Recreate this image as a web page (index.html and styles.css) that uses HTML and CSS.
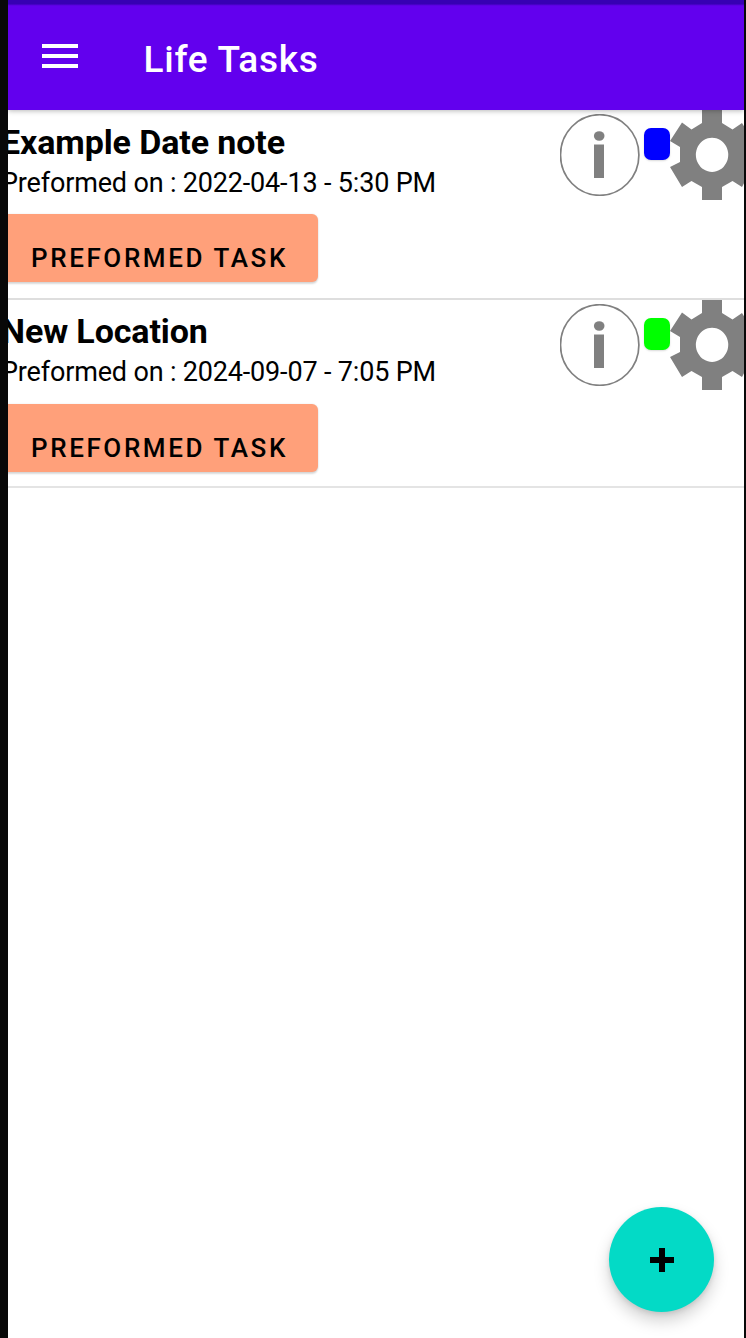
FILE: index.html
```html
<!DOCTYPE html>
<html lang="en">
<head>
<meta charset="utf-8">
<title>Life Tasks</title>
<link rel="stylesheet" href="styles.css">
</head>
<body>
<svg class="defs" aria-hidden="true">
  <symbol id="info" viewBox="0 0 80 82">
    <ellipse cx="39.7" cy="41" rx="39.2" ry="40.3" fill="none" stroke="#808080" stroke-width="1.7"/>
    <ellipse cx="39.2" cy="22" rx="5.3" ry="4.8" fill="#808080"/>
    <path d="M34 30.5h10V64H34z" fill="#808080"/>
  </symbol>
  <symbol id="gear" viewBox="0 0 74 90">
    <path fill="#808080" fill-rule="evenodd" d="M32 0H52V13L62.5 19.5L72 13L83 31L74 37V52L83 57L72 77L62.5 71L52 77V90H32V77L21.5 71L12 77L0 57L10 52V37L0 31L12 12.5L21.5 19.5L32 13ZM42 27.7a16.2 17.1 0 1 0 .1 0Z"/>
  </symbol>
</svg>
<div class="screen">
  <header class="bar">
    <svg class="menu" viewBox="0 0 36 24"><path d="M0 0h36v4H0zM0 10h36v4H0zM0 20h36v4H0z" fill="#fff"/></svg>
    <h1 class="title">Life Tasks</h1>
  </header>
  <main class="list">
    <section class="task">
      <div class="details">
        <h2 class="name">Example Date note</h2>
        <p class="when">Preformed on : 2022-04-13 - 5:30 PM</p>
        <button class="action">PREFORMED TASK</button>
      </div>
      <div class="icons">
        <svg class="info"><use href="#info"/></svg>
        <span class="chip blue"></span>
        <svg class="gear"><use href="#gear"/></svg>
      </div>
    </section>
    <section class="task last">
      <div class="details">
        <h2 class="name">New Location</h2>
        <p class="when">Preformed on : 2024-09-07 - 7:05 PM</p>
        <button class="action">PREFORMED TASK</button>
      </div>
      <div class="icons">
        <svg class="info"><use href="#info"/></svg>
        <span class="chip green"></span>
        <svg class="gear"><use href="#gear"/></svg>
      </div>
    </section>
  </main>
  <button class="fab" aria-label="Add task"><svg viewBox="0 0 24 24"><path d="M9 0h6v9h9v6h-9v9H9v-9H0V9h9z"/></svg></button>
</div>
</body>
</html>
```
FILE: styles.css
```css
* { box-sizing: border-box; }
body { margin: 0; background: #080808; font-family: Roboto, sans-serif; color: #000; }
.defs { display: none; }
.screen { position: relative; width: 736px; height: 1338px; margin-left: 8px; background: #fff; overflow: hidden; }
.bar {
  position: relative; display: flex; align-items: flex-start; height: 110px; padding-left: 34px;
  background: linear-gradient(#3700b3 0, #3700b3 4px, #5600d8 5px, #6200ee 6px);
  box-shadow: 0 1px 5px rgba(0, 0, 0, .28);
}
.menu { width: 36px; height: 24px; margin-top: 44px; }
.title { margin: 38px 0 0 65.5px; font-size: 37px; line-height: 43px; font-weight: 500; letter-spacing: .75px; color: #fff; white-space: nowrap; }
.task { display: flex; justify-content: space-between; height: 190px; border-bottom: 2px solid #dedede; }
.last { height: 188px; border-bottom-color: #e4e4e4; }
.details { padding-top: 12px; margin-left: -7px; }
.name { margin: 0; font-size: 34px; line-height: 40px; font-weight: 700; letter-spacing: -.1px; white-space: nowrap; }
.when { margin: 5px 0 0; font-size: 27px; line-height: 32px; letter-spacing: -.17px; white-space: nowrap; }
.action {
  display: block; width: 317px; height: 68px; margin: 15px 0 0; padding: 20px 0 0 30px; border: 0; border-radius: 6px;
  background: #ffa07a; box-shadow: 0 2px 2px rgba(0, 0, 0, .14), 0 0 2px rgba(0, 0, 0, .1);
  font: 500 26px/49px Roboto, sans-serif; letter-spacing: 2.6px; text-align: left; color: #000; white-space: nowrap;
}
.last .details { padding-top: 11px; }
.last .action { margin-top: 16px; line-height: 48px; }
.icons { display: flex; align-items: flex-start; }
.info { width: 80px; height: 82px; margin-top: 4px; }
.chip { width: 26px; height: 32px; margin: 18px 0 0 4px; border-radius: 7px; box-shadow: 0 1px 2px rgba(0, 0, 0, .15); }
.blue { background: #00f; }
.green { background: #0f0; }
.gear { width: 74px; height: 90px; }
.fab {
  position: absolute; right: 30px; bottom: 26px; display: grid; place-items: center;
  width: 105px; height: 105px; padding: 0; border: 0; border-radius: 50%; background: #03dac6;
  box-shadow: 0 9px 16px rgba(0, 0, 0, .18), 0 2px 5px rgba(0, 0, 0, .1);
}
.fab svg { width: 24px; height: 24px; }
```
